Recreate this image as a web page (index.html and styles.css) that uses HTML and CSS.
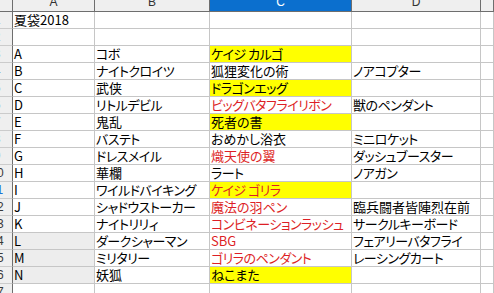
FILE: index.html
```html
<!DOCTYPE html>
<html lang="ja">
<head>
<meta charset="utf-8">
<title>夏袋2018</title>
<link rel="stylesheet" href="styles.css">
</head>
<body>
<div class="sheet">
  <div class="ch corner"></div>
  <div class="ch"><span>A</span></div>
  <div class="ch"><span>B</span></div>
  <div class="ch sel"><span>C</span></div>
  <div class="ch"><span>D</span></div>
  <div class="ch"></div>

  <div class="rh"><span>1</span></div>
  <div class="c">夏袋2018</div><div class="c"></div><div class="c"></div><div class="c"></div><div class="c"></div>

  <div class="rh"><span>2</span></div>
  <div class="c"></div><div class="c"></div><div class="c"></div><div class="c"></div><div class="c"></div>

  <div class="rh"><span>3</span></div>
  <div class="c">A</div><div class="c k">コボ</div><div class="c k y">ケイジ カルゴ</div><div class="c"></div><div class="c"></div>

  <div class="rh"><span>4</span></div>
  <div class="c">B</div><div class="c k">ナイトクロイツ</div><div class="c">狐狸変化の術</div><div class="c k">ノアコプター</div><div class="c"></div>

  <div class="rh"><span>5</span></div>
  <div class="c">C</div><div class="c">武侠</div><div class="c k y">ドラゴンエッグ</div><div class="c"></div><div class="c"></div>

  <div class="rh"><span>6</span></div>
  <div class="c">D</div><div class="c k">リトルデビル</div><div class="c k r">ビッグバタフライリボン</div><div class="c k">獣のペンダント</div><div class="c"></div>

  <div class="rh"><span>7</span></div>
  <div class="c">E</div><div class="c">鬼乱</div><div class="c y">死者の書</div><div class="c"></div><div class="c"></div>

  <div class="rh"><span>8</span></div>
  <div class="c">F</div><div class="c k">バステト</div><div class="c">おめかし浴衣</div><div class="c k">ミニロケット</div><div class="c"></div>

  <div class="rh"><span>9</span></div>
  <div class="c">G</div><div class="c k">ドレスメイル</div><div class="c r">熾天使の翼</div><div class="c k">ダッシュブースター</div><div class="c"></div>

  <div class="rh"><span>10</span></div>
  <div class="c">H</div><div class="c">華欄</div><div class="c k">ラート</div><div class="c k">ノアガン</div><div class="c"></div>

  <div class="rh hl"><span>11</span></div>
  <div class="c">I</div><div class="c k">ワイルドバイキング</div><div class="c k y r">ケイジ ゴリラ</div><div class="c"></div><div class="c"></div>

  <div class="rh"><span>12</span></div>
  <div class="c">J</div><div class="c k">シャドウストーカー</div><div class="c r">魔法の羽ペン</div><div class="c">臨兵闘者皆陣烈在前</div><div class="c"></div>

  <div class="rh"><span>13</span></div>
  <div class="c">K</div><div class="c k">ナイトリリィ</div><div class="c k r">コンビネーションラッシュ</div><div class="c k">サークルキーボード</div><div class="c"></div>

  <div class="rh"><span>14</span></div>
  <div class="c g">L</div><div class="c k">ダークシャーマン</div><div class="c r">SBG</div><div class="c k">フェアリーバタフライ</div><div class="c"></div>

  <div class="rh"><span>15</span></div>
  <div class="c g">M</div><div class="c k">ミリタリー</div><div class="c k r">ゴリラのペンダント</div><div class="c k">レーシングカート</div><div class="c"></div>

  <div class="rh"><span>16</span></div>
  <div class="c g">N</div><div class="c">妖狐</div><div class="c y">ねこまた</div><div class="c"></div><div class="c"></div>

  <div class="rh"><span>17</span></div>
  <div class="c"></div><div class="c"></div><div class="c"></div><div class="c"></div><div class="c"></div>
</div>
</body>
</html>
```

FILE: styles.css
```css
html, body {
  margin: 0;
  padding: 0;
  background: #ffffff;
  overflow: hidden;
}

.sheet {
  display: grid;
  grid-template-columns: 13px 82px 115px 142px 129px 1fr;
  grid-template-rows: 12px;
  grid-auto-rows: 17px;
  width: 494px;
  height: 293px;
  overflow: hidden;
  font-family: "Noto Sans CJK JP", "Noto Sans", sans-serif;
  font-size: 13px;
  color: #000000;
}

.sheet > div {
  box-sizing: border-box;
  min-width: 0;
}

.ch {
  background: #efefef;
  border-right: 1px solid #6e6e6e;
  border-bottom: 1px solid #6e6e6e;
  display: flex;
  align-items: flex-end;
  justify-content: center;
  overflow: hidden;
  font-family: "Liberation Sans", sans-serif;
  font-size: 12px;
  color: #333333;
}

.ch span {
  line-height: 12px;
  margin-bottom: 3px;
}

.ch.sel {
  background: #0b6fce;
  color: #ffffff;
}

.rh {
  background: #efefef;
  border-right: 1px solid #6e6e6e;
  border-bottom: 1px solid #cbcbcb;
  display: flex;
  justify-content: flex-end;
  align-items: center;
  overflow: hidden;
  font-family: "Liberation Sans", sans-serif;
  font-size: 12px;
  color: #3a3a3a;
}

.rh span {
  flex: 0 0 30px;
  text-align: center;
  line-height: 16px;
}

.rh.hl {
  color: #1a73d6;
}

.c {
  border-right: 1px solid #c6c6c6;
  border-bottom: 1px solid #c6c6c6;
  padding-left: 1px;
  line-height: 16px;
  white-space: nowrap;
  overflow: hidden;
  font-feature-settings: "palt";
}

.k {
  letter-spacing: -0.5px;
}

.y {
  background: #ffff00;
}

.r {
  color: #dd1f26;
}

.g {
  background: #ededed;
}
```
